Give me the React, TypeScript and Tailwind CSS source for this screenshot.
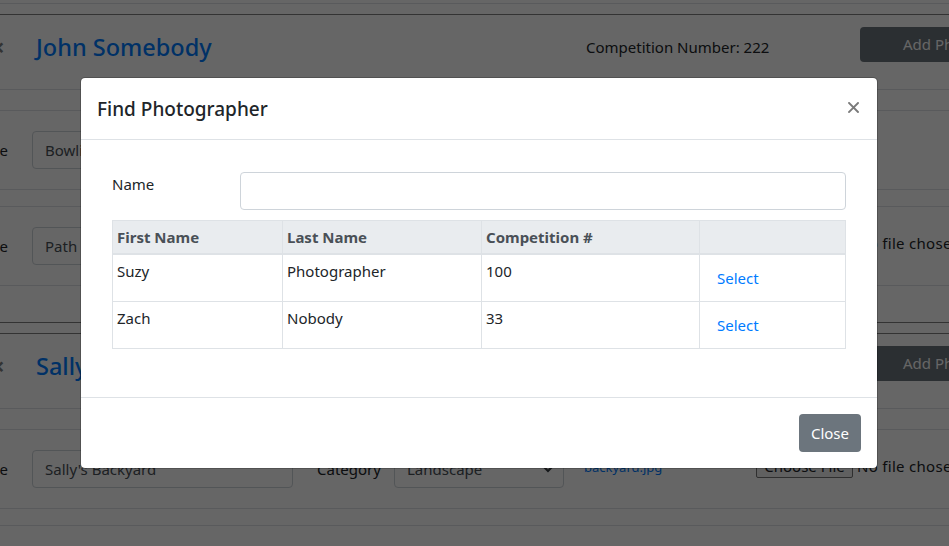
import React from "react";

type RowProps = {
  value: string;
  category: string;
  link: string;
  file?: boolean;
};

function EntryRow({ value, category, link, file }: RowProps) {
  return (
    <div className="flex h-[80px] items-center border-y border-[#dee2e6]">
      <label className="-ml-[40px] w-[48px] shrink-0 text-right text-[15px] leading-6 text-[#212529]">Title</label>
      <div className="ml-[24px] flex h-[38px] w-[261px] shrink-0 items-center rounded-[4px] border border-[#ced4da] px-[12px] text-[15px] text-[#495057]">
        {value}
      </div>
      <label className="ml-[24px] w-[77px] shrink-0 text-[15px] leading-6 text-[#212529]">Category</label>
      <div className="flex h-[38px] w-[170px] shrink-0 items-center justify-between rounded-[4px] border border-[#ced4da] pl-[12px] pr-[10px] text-[15px] text-[#495057]">
        <span>{category}</span>
        <svg width="10" height="8" viewBox="0 0 10 8">
          <path d="M1 2 L5 6 L9 2" fill="none" stroke="#343a40" strokeWidth="2" />
        </svg>
      </div>
      <a className="ml-[20px] -mt-[4px] w-[172px] shrink-0 text-[13px] leading-5 text-[#007bff]">{link}</a>
      {file ? (
        <div className="-mt-[7px] flex shrink-0 items-center whitespace-nowrap text-[15px] text-[#212529]">
          <span className="flex h-[24px] w-[97px] items-center justify-center rounded-[2px] border border-[#767676] bg-[#efefef] leading-5">
            Choose File
          </span>
          <span className="ml-[4px] tracking-[0.3px] leading-6">No file chosen</span>
        </div>
      ) : null}
    </div>
  );
}

function CardHeader({ name, number }: { name: string; number: string }) {
  return (
    <div className="flex h-[75px] items-start border-b border-[#dee2e6] pt-[12px]">
      <span className="-ml-[9px] mt-[8px] w-[14px] shrink-0 text-[24px] font-bold leading-6 text-[#808080]">×</span>
      <h4 className="ml-[31px] mt-[6px] w-[550px] shrink-0 whitespace-nowrap text-[23.5px] font-medium leading-[29px] text-[#007bff]">
        {name}
      </h4>
      <div className="mt-[8px] w-[274px] shrink-0 whitespace-nowrap text-[15px] leading-6 text-[#212529]">
        Competition Number: {number}
      </div>
      <button className="h-[35px] w-[180px] shrink-0 rounded-[4px] bg-[#6c757d] pl-[43px] text-left text-[15px] text-white">
        Add Photo
      </button>
    </div>
  );
}

export default function App() {
  return (
    <div className="relative h-[546px] w-[949px] overflow-hidden bg-white font-['Noto_Sans',sans-serif] text-[15px] text-[#212529]">
      {/* page behind the modal */}
      <div className="flex flex-col">
        <div className="h-[4px] border-b border-[#dee2e6]" />
        <section className="mt-[10px] border-y border-[#808080] pb-[36px]">
          <CardHeader name="John Somebody" number="222" />
          <div className="mt-[20px] flex flex-col gap-4">
            <EntryRow value="Bowling Alley" category="Action" link="bowling.jpg" />
            <EntryRow value="Path in the Woods" category="Nature" link="path.jpg" file />
          </div>
        </section>
        <section className="mt-[10px] border-t border-[#808080]">
          <CardHeader name="Sally Photographer" number="100" />
          <div className="mt-[20px] flex flex-col gap-4">
            <EntryRow value="Sally's Backyard" category="Landscape" link="backyard.jpg" file />
            <EntryRow value="Garden Gate" category="Landscape" link="gate.jpg" file />
          </div>
        </section>
      </div>

      {/* backdrop */}
      <div className="absolute inset-0 bg-black/60" />

      {/* modal */}
      <div className="absolute left-[80px] top-[77px] w-[798px] rounded-[5px] border border-black/20 bg-white bg-clip-padding">
        <div className="flex items-start justify-between border-b border-[#dee2e6] px-4 pb-[15px] pt-4">
          <h5 className="text-[19px] font-medium leading-[30px] text-[#212529]">Find Photographer</h5>
          <svg className="mr-[2px] mt-[8px]" width="11" height="11" viewBox="0 0 11 11">
            <path d="M1 1 L10 10 M10 1 L1 10" stroke="#7a7a7a" strokeWidth="1.9" strokeLinecap="square" />
          </svg>
        </div>
        <div className="px-4 pb-[48px] pt-8">
          <div className="px-[15px]">
            <div className="flex items-start">
              <label className="w-[127.5px] shrink-0 text-[15px] leading-6 text-[#212529]">Name</label>
              <div className="h-[38px] flex-1 rounded-[4px] border border-[#ced4da] bg-white" />
            </div>
            <table className="mt-[10px] w-full table-fixed border-collapse text-[15px]">
              <colgroup>
                <col className="w-[170px]" />
                <col className="w-[199px]" />
                <col className="w-[218px]" />
                <col />
              </colgroup>
              <thead>
                <tr className="bg-[#e9ecef] text-[#495057]">
                  <th className="border border-b-2 border-[#dee2e6] p-1 text-left align-bottom font-bold leading-6">First Name</th>
                  <th className="border border-b-2 border-[#dee2e6] p-1 text-left align-bottom font-bold leading-6">Last Name</th>
                  <th className="border border-b-2 border-[#dee2e6] p-1 text-left align-bottom font-bold leading-6">Competition #</th>
                  <th className="border border-b-2 border-[#dee2e6] p-1" />
                </tr>
              </thead>
              <tbody className="text-[#212529]">
                {[
                  ["Suzy", "Photographer", "100"],
                  ["Zach", "Nobody", "33"],
                ].map((r) => (
                  <tr key={r[0]}>
                    <td className="border border-[#dee2e6] p-1 align-top leading-6">{r[0]}</td>
                    <td className="border border-[#dee2e6] p-1 align-top leading-6">{r[1]}</td>
                    <td className="border border-[#dee2e6] p-1 align-top leading-6">{r[2]}</td>
                    <td className="border border-[#dee2e6] p-1 align-top">
                      <button className="h-[38px] border border-transparent px-[12px] text-[15px] leading-6 text-[#007bff]">
                        Select
                      </button>
                    </td>
                  </tr>
                ))}
              </tbody>
            </table>
          </div>
        </div>
        <div className="flex justify-end border-t border-[#dee2e6] p-4">
          <button className="h-[38px] rounded-[4px] bg-[#6c757d] px-[12px] text-[15px] leading-6 text-white">Close</button>
        </div>
      </div>
    </div>
  );
}
